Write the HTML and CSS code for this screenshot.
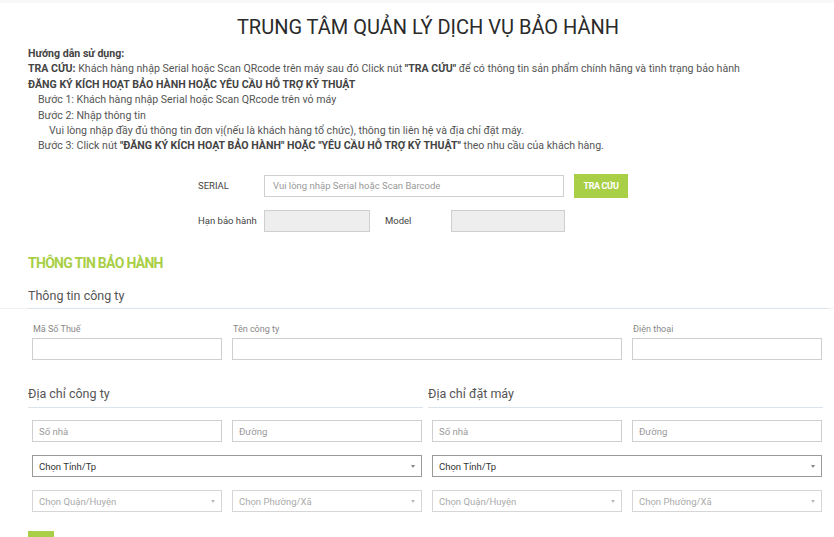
FILE: index.html
```html
<!DOCTYPE html>
<html lang="vi">
<head>
<meta charset="utf-8">
<title>Trung tâm quản lý dịch vụ bảo hành</title>
<link rel="stylesheet" href="styles.css">
</head>
<body>
<div class="topstrip"></div>
<div class="page">
  <h1 class="title">TRUNG TÂM QUẢN LÝ DỊCH VỤ BẢO HÀNH</h1>
  <div class="guide">
    <div class="b">Hướng dẫn sử dụng:</div>
    <div><b>TRA CỨU:</b> Khách hàng nhập Serial hoặc Scan QRcode trên máy sau đó Click nút <b>"TRA CỨU"</b> để có thông tin sản phẩm chính hãng và tình trạng bảo hành</div>
    <div class="b">ĐĂNG KÝ KÍCH HOẠT BẢO HÀNH HOẶC YÊU CẦU HỖ TRỢ KỸ THUẬT</div>
    <div class="l1">Bước 1: Khách hàng nhập Serial hoặc Scan QRcode trên vỏ máy</div>
    <div class="l1">Bước 2: Nhập thông tin</div>
    <div class="l2">Vui lòng nhập đầy đủ thông tin đơn vị(nếu là khách hàng tổ chức), thông tin liên hệ và địa chỉ đặt máy.</div>
    <div class="l1">Bước 3: Click nút <b>"ĐĂNG KÝ KÍCH HOẠT BẢO HÀNH" HOẶC "YÊU CẦU HỖ TRỢ KỸ THUẬT"</b> theo nhu cầu của khách hàng.</div>
  </div>

  <div class="lookup">
    <div class="lrow">
      <span class="llabel">SERIAL</span>
      <input class="inp serial" type="text" placeholder="Vui lòng nhập Serial hoặc Scan Barcode">
      <button class="btn">TRA CỨU</button>
    </div>
    <div class="lrow second">
      <span class="llabel">Hạn bảo hành</span>
      <input class="inp ro w105" type="text" readonly>
      <span class="llabel model">Model</span>
      <input class="inp ro w113" type="text" readonly>
    </div>
  </div>

  <h2 class="section">THÔNG TIN BẢO HÀNH</h2>
</div>

<div class="subrow">
  <h3 class="subhead">Thông tin công ty</h3>
</div>

<div class="page">
  <div class="grid4 company">
    <div class="field"><label>Mã Số Thuế</label><input class="inp" type="text"></div>
    <div class="field span2"><label>Tên công ty</label><input class="inp" type="text"></div>
    <div class="field"><label>Điện thoại</label><input class="inp" type="text"></div>
  </div>

  <div class="halves">
    <h3 class="subhead2">Địa chỉ công ty</h3>
    <h3 class="subhead2">Địa chỉ đặt máy</h3>
  </div>

  <div class="grid4 address">
    <input class="inp" type="text" placeholder="Số nhà">
    <input class="inp" type="text" placeholder="Đường">
    <input class="inp" type="text" placeholder="Số nhà">
    <input class="inp" type="text" placeholder="Đường">

    <div class="select span2"><span>Chọn Tỉnh/Tp</span><i class="caret"></i></div>
    <div class="select span2"><span>Chọn Tỉnh/Tp</span><i class="caret"></i></div>

    <div class="select dis"><span>Chọn Quận/Huyện</span><i class="caret"></i></div>
    <div class="select dis"><span>Chọn Phường/Xã</span><i class="caret"></i></div>
    <div class="select dis"><span>Chọn Quận/Huyện</span><i class="caret"></i></div>
    <div class="select dis"><span>Chọn Phường/Xã</span><i class="caret"></i></div>
  </div>

  <div class="agree">
    <span class="gbox"></span>
    <span class="agree-text">Địa chỉ đặt máy giống với địa chỉ công ty</span>
  </div>
</div>
</body>
</html>
```
FILE: styles.css
```css
html, body {
  margin: 0;
  padding: 0;
  background: #fff;
  overflow: hidden;
}
body {
  font-family: Roboto, "Noto Sans", Arial, sans-serif;
  color: #555;
}
.topstrip {
  height: 3px;
  background: #f8f8f8;
}
.title {
  margin: 10px 0 0;
  text-align: center;
  font-size: 20px;
  line-height: 28px;
  font-weight: 400;
  color: #2a2a2a;
}
.page {
  padding: 0 6px 0 28px;
}
.guide {
  margin-top: 5px;
  font-size: 10.6px;
  line-height: 15.4px;
  color: #555;
}
.guide b, .guide .b {
  font-weight: 700;
  color: #444;
}
.guide .l1 { padding-left: 10px; }
.guide .l2 { padding-left: 21px; }

.lookup {
  margin-top: 20px;
  padding-left: 170px;
}
.lrow {
  display: flex;
  align-items: center;
  height: 24px;
}
.lrow.second {
  margin-top: 12px;
  height: 22px;
}
.llabel {
  width: 66px;
  flex: none;
  font-size: 9.5px;
  color: #444;
}
.llabel.model { margin-left: 15px; }
.inp {
  box-sizing: border-box;
  height: 22px;
  border: 1px solid #cfcfcf;
  background: #fff;
  font-family: Roboto, "Noto Sans", Arial, sans-serif;
  font-size: 9.5px;
  color: #333;
  padding: 0 6px;
  margin: 0;
  outline: none;
  border-radius: 0;
}
.inp::placeholder { color: #999; }
.serial { width: 300px; padding: 0 8px; }
.ro { background: #eee; }
.w105 { width: 106px; }
.w113 { width: 114px; }
.btn {
  margin-left: 10px;
  width: 54px;
  height: 24px;
  border: none;
  background: #a8cf45;
  color: #fff;
  font-family: Roboto, "Noto Sans", Arial, sans-serif;
  font-weight: 700;
  font-size: 9px;
  letter-spacing: -0.4px;
  padding: 0;
}
.section {
  margin: 21px 0 0;
  font-size: 14px;
  line-height: 20px;
  font-weight: 700;
  color: #a8cf45;
  letter-spacing: -0.7px;
}
.subrow {
  margin-top: 13px;
  border-bottom: 1px solid #f2f2f2;
}
.subhead {
  margin: 0 6px 0 28px;
  padding-bottom: 3px;
  font-size: 12.5px;
  line-height: 18px;
  font-weight: 400;
  color: #555;
  border-bottom: 1px solid #dde3ea;
  position: relative;
  top: 1px;
}
.grid4 {
  display: grid;
  grid-template-columns: repeat(4, 190px);
  column-gap: 10px;
  padding-left: 4px;
}
.span2 { grid-column: span 2; }
.company { margin-top: 13px; }
.field label {
  display: block;
  font-size: 9px;
  line-height: 14px;
  color: #888;
  margin-bottom: 2px;
  padding-left: 1px;
}
.field .inp { width: 100%; }
.halves {
  display: grid;
  grid-template-columns: 395px 395px;
  column-gap: 5px;
  margin-top: 25px;
}
.subhead2 {
  margin: 0;
  padding-bottom: 4px;
  font-size: 12.5px;
  line-height: 18px;
  font-weight: 400;
  color: #555;
  border-bottom: 1px solid #dde3ea;
}
.address {
  margin-top: 12px;
  row-gap: 13px;
}
.address .inp { width: 100%; }
.select {
  box-sizing: border-box;
  height: 22px;
  border: 1px solid #9a9a9a;
  display: flex;
  align-items: center;
  justify-content: space-between;
  padding: 0 6px 0 6px;
  font-size: 9.5px;
  color: #333;
}
.select.dis {
  border-color: #d6d6d6;
  color: #aaa;
}
.caret {
  width: 0;
  height: 0;
  border-left: 2.5px solid transparent;
  border-right: 2.5px solid transparent;
  border-top: 3px solid #888;
}
.select.dis .caret { border-top-color: #bbb; }
.agree {
  margin-top: 19px;
  display: flex;
  align-items: flex-start;
}
.gbox {
  width: 26px;
  height: 26px;
  background: #a8cf45;
  flex: none;
}
.agree-text {
  margin-left: 51px;
  margin-top: 4px;
  font-size: 11px;
  line-height: 15px;
  color: #555;
}
```
